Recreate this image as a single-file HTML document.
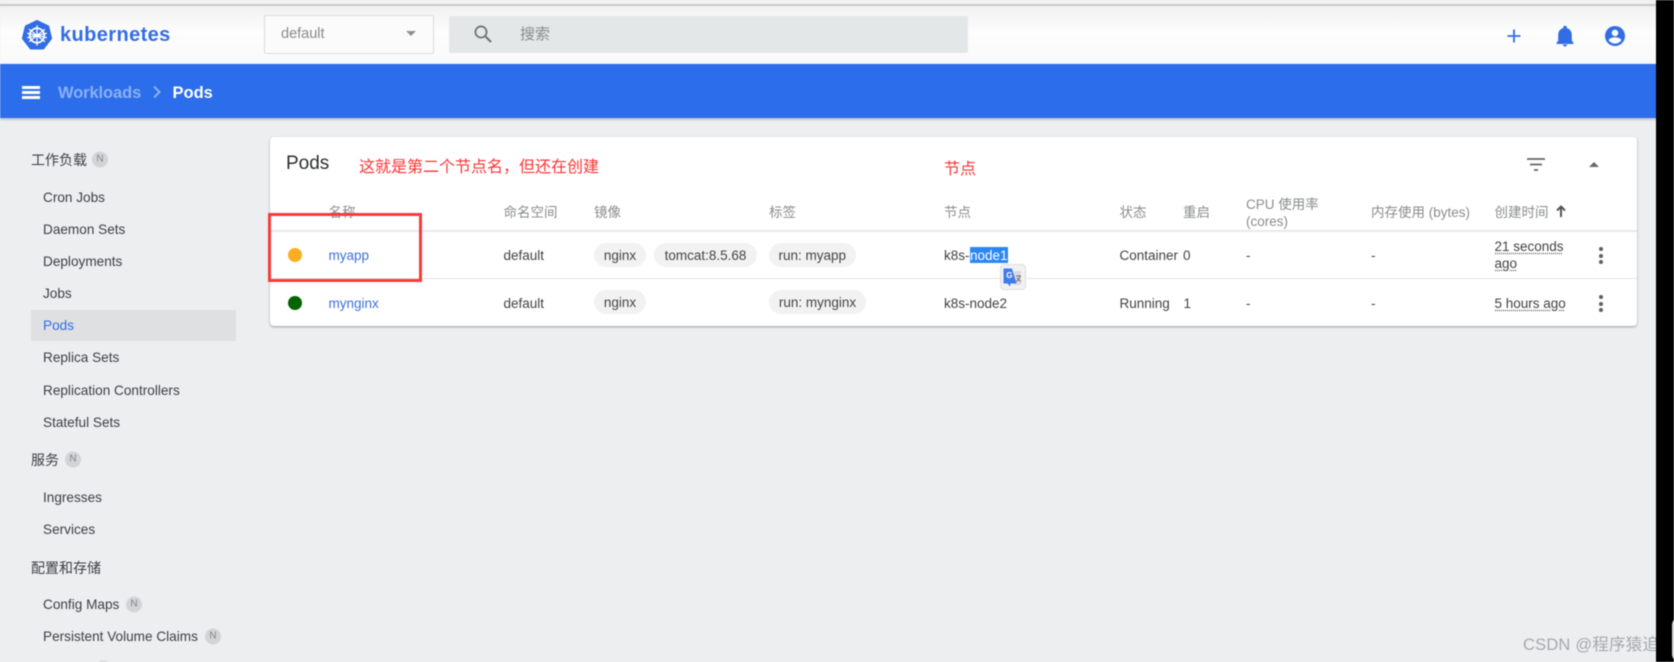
<!DOCTYPE html>
<html lang="zh">
<head>
<meta charset="utf-8">
<title>Pods - Kubernetes Dashboard</title>
<style>
html,body{margin:0;padding:0;width:1674px;height:662px;overflow:hidden;background:#eceef0}
body{position:relative;font-family:"Liberation Sans","Noto Sans CJK SC",sans-serif;font-size:13.5px;color:#424242}
.wrap{position:absolute;left:0;top:0;width:1674px;height:662px;overflow:hidden;filter:blur(.4px)}
.a{position:absolute;white-space:nowrap}
.t{position:absolute;white-space:nowrap;line-height:20px;height:20px;transform:translateY(-9px)}
.side{font-size:13.6px;left:43px;color:#3d3f42}
.group{font-size:14px;left:31px;color:#3d3f42}
.n{position:absolute;width:16px;height:16px;border-radius:50%;background:#d3d4d6;color:#85878a;font-size:10px;line-height:16px;text-align:center;transform:translate(-8px,-7.5px)}
.th{color:#8b8c8e;font-size:13.5px}
.link{color:#3f6fd8}
.chip{position:absolute;height:24px;border-radius:12px;background:#f2f2f3;line-height:26px;text-align:center;font-size:13.5px;color:#444;white-space:nowrap}
.dot{position:absolute;width:14px;height:14px;border-radius:50%;left:288px}
.keb{position:absolute;left:1599px;width:4px}
.keb i{display:block;width:4px;height:4px;border-radius:50%;background:#5f6060;margin-bottom:2.5px}
.u{text-decoration:underline dotted #555;text-underline-offset:2px}
</style>
</head>
<body>
<div class="wrap">
  <!-- top strip and header -->
  <div class="a" style="left:0;top:0;width:1674px;height:4px;background:#f2f2f2"></div>
  <div class="a" style="left:0;top:4px;width:1674px;height:2px;background:#c9c9c9"></div>
  <div class="a" style="left:0;top:6px;width:1674px;height:58px;background:linear-gradient(#f1f1f1,#fdfdfd 45%,#fafafa)"></div>

  <svg class="a" style="left:21px;top:20px" width="32" height="30" viewBox="0 0 32 31">
    <polygon points="16,1 27.6,6.6 30.6,19 22.5,29.5 9.5,29.5 1.4,19 4.4,6.6" fill="#326de6" stroke="#326de6" stroke-width="2" stroke-linejoin="round"/>
    <g fill="none" stroke="#fff">
      <circle cx="16" cy="16" r="7.5" stroke-width="1.8"/>
      <circle cx="16" cy="16" r="1.8" fill="#fff" stroke="none"/>
      <path d="M16 5.500V26.500M7.800 9.500L24.200 22.500M24.200 9.500L7.800 22.500M5.800 18.300L26.200 13.700M26.200 18.300L5.800 13.700" stroke-width="1.3"/>
    </g>
  </svg>
  <div class="t" style="left:60px;top:33.500px;font-size:20px;font-weight:bold;color:#326de6;letter-spacing:.4px">kubernetes</div>

  <div class="a" style="left:264px;top:15px;width:168px;height:37px;background:#fbfbfb;border:1px solid #dcdcdc;border-radius:2px"></div>
  <div class="t" style="left:281px;top:33px;font-size:14.500px;color:#8a8a8a">default</div>
  <div class="a" style="left:406px;top:31px;width:0;height:0;border-left:5px solid transparent;border-right:5px solid transparent;border-top:5px solid #8f8f8f"></div>

  <div class="a" style="left:449px;top:16px;width:519px;height:37px;background:#e4e7e8;border-radius:2px"></div>
  <svg class="a" style="left:473px;top:24px" width="20" height="20" viewBox="0 0 20 20">
    <circle cx="8" cy="8" r="5.600" fill="none" stroke="#6d6f70" stroke-width="1.700"/>
    <path d="M12.200 12.200L18 18" stroke="#6d6f70" stroke-width="2"/>
  </svg>
  <div class="t" style="left:520px;top:33.500px;font-size:15px;color:#888a8b">搜索</div>

  <svg class="a" style="left:1506px;top:28px" width="16" height="16" viewBox="0 0 16 16"><path d="M8 1.500V14.500M1.500 8H14.500" stroke="#326de6" stroke-width="1.800"/></svg>
  <svg class="a" style="left:1553px;top:24px" width="24" height="24" viewBox="0 0 24 24"><path d="M12 22.500c1.200 0 2.100-.9 2.100-2h-4.200c0 1.100.9 2 2.100 2zm6.800-6V11c0-3.400-1.800-6.100-5-6.900V3.500a1.800 1.800 0 0 0-3.600 0V4.100c-3.200.8-5 3.500-5 6.900v5.500L3.500 19v1h17v-1z" fill="#326de6"/></svg>
  <svg class="a" style="left:1605px;top:26px" width="20" height="20" viewBox="0 0 20 20"><path fill="#326de6" fill-rule="evenodd" d="M10 0a10 10 0 1 0 0 20a10 10 0 0 0 0-20zm0 3.600a3.300 3.300 0 1 1 0 6.600a3.300 3.300 0 0 1 0-6.600zM10 17.600c-2.700 0-5-1.300-6.300-3.300c.1-2 4.200-3.100 6.300-3.100s6.200 1.100 6.300 3.100c-1.300 2-3.600 3.300-6.300 3.300z"/></svg>

  <!-- blue bar -->
  <div class="a" style="left:0;top:64px;width:1674px;height:54px;background:#2b6dea;box-shadow:0 1px 3px rgba(0,0,0,.3)"></div>
  <div class="a" style="left:22px;top:86px;width:18px;height:2.500px;background:#fff"></div>
  <div class="a" style="left:22px;top:91px;width:18px;height:2.500px;background:#fff"></div>
  <div class="a" style="left:22px;top:96px;width:18px;height:2.500px;background:#fff"></div>
  <div class="t" style="left:58px;top:92px;font-size:16.500px;font-weight:bold;color:#8bb0f2;letter-spacing:-.1px">Workloads</div>
  <svg class="a" style="left:151px;top:85px" width="12" height="14" viewBox="0 0 12 14"><path d="M3 1.500L8.500 7L3 12.500" fill="none" stroke="#8bb0f2" stroke-width="2"/></svg>
  <div class="t" style="left:172.500px;top:92px;font-size:16.500px;font-weight:bold;color:#fff">Pods</div>

  <!-- sidebar -->
  <div class="a" style="left:31px;top:310px;width:205px;height:31px;background:#dfe0e1"></div>
  <div class="t group" style="top:159px">工作负载</div><div class="n" style="left:100px;top:159px">N</div>
  <div class="t side" style="top:197px">Cron Jobs</div>
  <div class="t side" style="top:229px">Daemon Sets</div>
  <div class="t side" style="top:261px">Deployments</div>
  <div class="t side" style="top:292.500px">Jobs</div>
  <div class="t side" style="top:325px;color:#326de6">Pods</div>
  <div class="t side" style="top:357px">Replica Sets</div>
  <div class="t side" style="top:390px">Replication Controllers</div>
  <div class="t side" style="top:422px">Stateful Sets</div>
  <div class="t group" style="top:459px">服务</div><div class="n" style="left:73px;top:459px">N</div>
  <div class="t side" style="top:497px">Ingresses</div>
  <div class="t side" style="top:529px">Services</div>
  <div class="t group" style="top:567px">配置和存储</div>
  <div class="t side" style="top:604px">Config Maps</div><div class="n" style="left:134px;top:604px">N</div>
  <div class="t side" style="top:636px">Persistent Volume Claims</div><div class="n" style="left:213px;top:636px">N</div>
  <div class="t side" style="top:669px">Secrets</div><div class="n" style="left:103px;top:668px">N</div>

  <!-- card -->
  <div class="a" style="left:270px;top:137px;width:1367px;height:189px;background:#fff;border-radius:4px;box-shadow:0 1px 2px rgba(0,0,0,.35)"></div>
  <div class="t" style="left:286px;top:163px;font-size:19px;color:#2e2f31">Pods</div>
  <div class="t" style="left:359px;top:167px;font-size:16px;color:#f33">这就是第二个节点名，但还在创建</div>
  <div class="t" style="left:944px;top:169px;font-size:16px;color:#f33">节点</div>

  <svg class="a" style="left:1527px;top:158px" width="18" height="14" viewBox="0 0 18 14"><path d="M0 1H18M3 6.500H15M7 12H11" stroke="#666" stroke-width="1.800"/></svg>
  <div class="a" style="left:1589px;top:162px;width:0;height:0;border-left:5px solid transparent;border-right:5px solid transparent;border-bottom:5px solid #6a6a6a"></div>

  <div class="t th" style="left:328.500px;top:212px">名称</div>
  <div class="t th" style="left:503.500px;top:212px">命名空间</div>
  <div class="t th" style="left:594px;top:212px">镜像</div>
  <div class="t th" style="left:769px;top:212px">标签</div>
  <div class="t th" style="left:944px;top:212px">节点</div>
  <div class="t th" style="left:1119.500px;top:212px">状态</div>
  <div class="t th" style="left:1183px;top:212px">重启</div>
  <div class="t th" style="left:1246px;top:204px">CPU 使用率</div>
  <div class="t th" style="left:1246px;top:221px">(cores)</div>
  <div class="t th" style="left:1371px;top:212px">内存使用 (bytes)</div>
  <div class="t th" style="left:1494.500px;top:212px">创建时间</div>
  <svg class="a" style="left:1555px;top:204px" width="12" height="14" viewBox="0 0 12 14"><path d="M6 13V3M2 6.500L6 2.500L10 6.500" fill="none" stroke="#555" stroke-width="2"/></svg>

  <div class="a" style="left:270px;top:230px;width:1367px;height:2px;background:#e9e9e9"></div>
  <div class="a" style="left:270px;top:278px;width:1367px;height:1px;background:#e3e3e3"></div>

  <!-- row 1 -->
  <div class="dot" style="top:248px;background:#ffad20"></div>
  <div class="t link" style="left:328.500px;top:255px">myapp</div>
  <div class="t" style="left:503.500px;top:255px">default</div>
  <div class="chip" style="left:594px;top:243px;width:52px">nginx</div>
  <div class="chip" style="left:654px;top:243px;width:103px">tomcat:8.5.68</div>
  <div class="chip" style="left:769px;top:243px;width:86.500px">run: myapp</div>
  <div class="t" style="left:944px;top:255px">k8s-</div>
  <div class="a" style="left:969.500px;top:247px;width:38px;height:16px;background:#2b86f5"></div>
  <div class="t" style="left:970px;top:255px;color:#fff">node1</div>
  <div class="t" style="left:1119.500px;top:255px;width:59px;overflow:hidden">Container</div>
  <div class="t" style="left:1183px;top:255px">0</div>
  <div class="t" style="left:1246px;top:255px">-</div>
  <div class="t" style="left:1371px;top:255px">-</div>
  <div class="t" style="left:1494.500px;top:246px"><span class="u">21 seconds</span></div>
  <div class="t" style="left:1494.500px;top:263px"><span class="u">ago</span></div>
  <div class="keb" style="top:247px"><i></i><i></i><i></i></div>

  <!-- row 2 -->
  <div class="dot" style="top:296px;background:#006400"></div>
  <div class="t link" style="left:328.500px;top:303px">mynginx</div>
  <div class="t" style="left:503.500px;top:303px">default</div>
  <div class="chip" style="left:594px;top:290px;width:52px">nginx</div>
  <div class="chip" style="left:769px;top:290px;width:97px">run: mynginx</div>
  <div class="t" style="left:944px;top:303px">k8s-node2</div>
  <div class="t" style="left:1119.500px;top:303px">Running</div>
  <div class="t" style="left:1183.500px;top:303px">1</div>
  <div class="t" style="left:1246px;top:303px">-</div>
  <div class="t" style="left:1371px;top:303px">-</div>
  <div class="t" style="left:1494.500px;top:303px"><span class="u">5 hours ago</span></div>
  <div class="keb" style="top:295px"><i></i><i></i><i></i></div>

  <!-- translate popup -->
  <div class="a" style="left:1000px;top:264px;width:24px;height:24px;background:#f1f1f1;border:1px solid #dedede;border-radius:4px"></div>
  <svg class="a" style="left:1001px;top:265px" width="24" height="24" viewBox="0 0 24 24">
    <path d="M13 6L20 6V20H13Z" fill="#dcdcdc"/>
    <path d="M15 11H20M17.500 10V11.500M19 11.500C18.500 14 17 15.500 15 16.500M16 12.500C16.800 14 18 15.500 20 16.500" fill="none" stroke="#777" stroke-width="1"/>
    <path d="M2.500 3.500H11L15.500 18.500H9.500L9 21.500L6.500 18.500H2.500Z" fill="#3f7bec"/>
    <text x="5.200" y="13" font-family="Liberation Sans" font-size="8" font-weight="bold" fill="#fff">G</text>
  </svg>

  <!-- annotation box -->
  <div class="a" style="left:268px;top:213px;width:154px;height:69px;box-sizing:border-box;border:3px solid #f53b3b"></div>

  <!-- watermark -->
  <div class="t" style="left:1523px;top:644px;font-size:16.500px;color:#a6a8aa;letter-spacing:.2px">CSDN @程序猿追</div>

  <!-- right black strip -->
  <div class="a" style="left:1656px;top:0;width:18px;height:662px;background:#000"></div>
  <div class="a" style="left:1672px;top:617px;width:12px;height:45px;border-radius:8px 0 0 8px;background:#d9d9d9"></div>
</div>
</body>
</html>
